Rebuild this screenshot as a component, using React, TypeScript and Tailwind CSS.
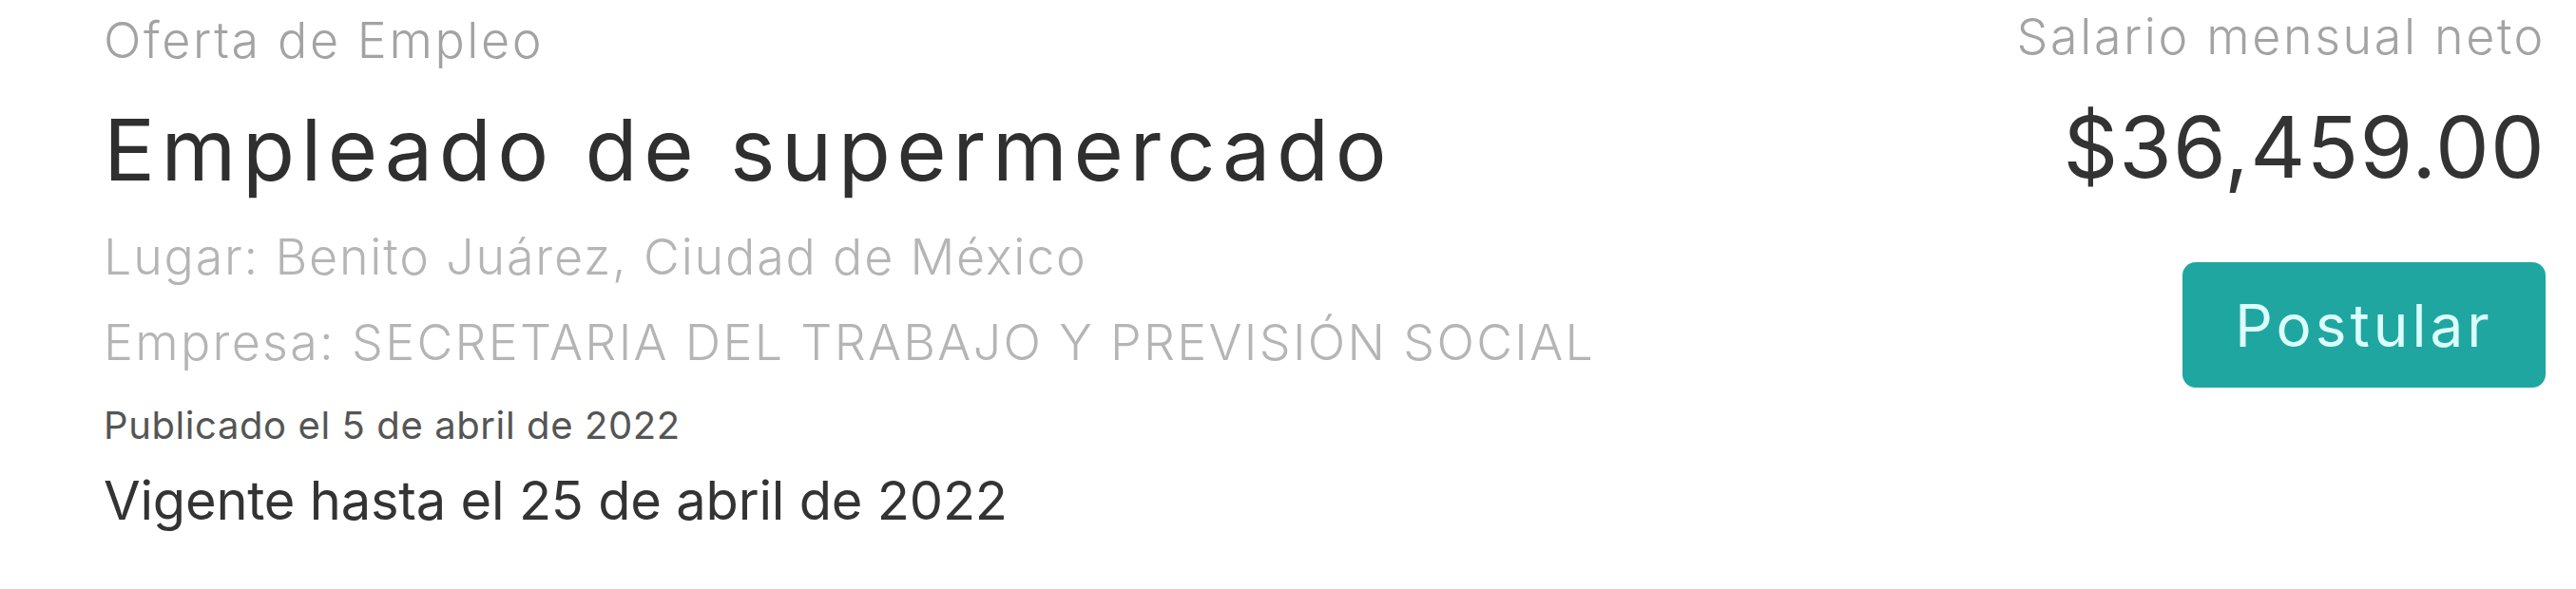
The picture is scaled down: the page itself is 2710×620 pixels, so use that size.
import React from "react";

export default function App() {
  const font = { fontFamily: "Inter, 'Noto Sans', sans-serif" };
  return (
    <div className="w-[2710px] h-[620px] bg-white flex justify-between pl-[109px] pr-[32px]" style={font}>
      <div className="flex flex-col">
        <div className="text-[52px] leading-[86px] h-[86px] font-light text-[#a3a3a3] tracking-[2.6px]">Oferta de Empleo</div>
        <div className="text-[90px] leading-[138px] h-[138px] font-normal text-[#2f2f2f] tracking-[6.5px] mt-[3px]">Empleado de supermercado</div>
        <div className="text-[52px] leading-[88px] h-[88px] font-light text-[#b5b5b5] tracking-[1.8px]">Lugar: Benito Juárez, Ciudad de México</div>
        <div className="text-[52px] leading-[92px] h-[92px] font-light text-[#b5b5b5] tracking-[2.3px]">Empresa: SECRETARIA DEL TRABAJO Y PREVISIÓN SOCIAL</div>
        <div className="text-[40px] leading-[82px] h-[82px] font-normal text-[#555555] tracking-[0.6px]">Publicado el 5 de abril de 2022</div>
        <div className="text-[56px] leading-[77px] h-[77px] font-normal text-[#333333] tracking-[-0.2px]">Vigente hasta el 25 de abril de 2022</div>
      </div>
      <div className="flex flex-col items-end">
        <div className="text-[52px] leading-[78px] h-[78px] font-light text-[#a3a3a3] tracking-[2.6px]">Salario mensual neto</div>
        <div className="text-[90px] leading-[154px] h-[154px] font-normal text-[#333333] tracking-[1.2px]">$36,459.00</div>
        <button className="mt-[44px] w-[382px] h-[132px] rounded-[14px] bg-[#20a6a1] text-[#dcfffb] text-[62px] tracking-[4px] flex items-center justify-center">
          Postular
        </button>
      </div>
    </div>
  );
}
